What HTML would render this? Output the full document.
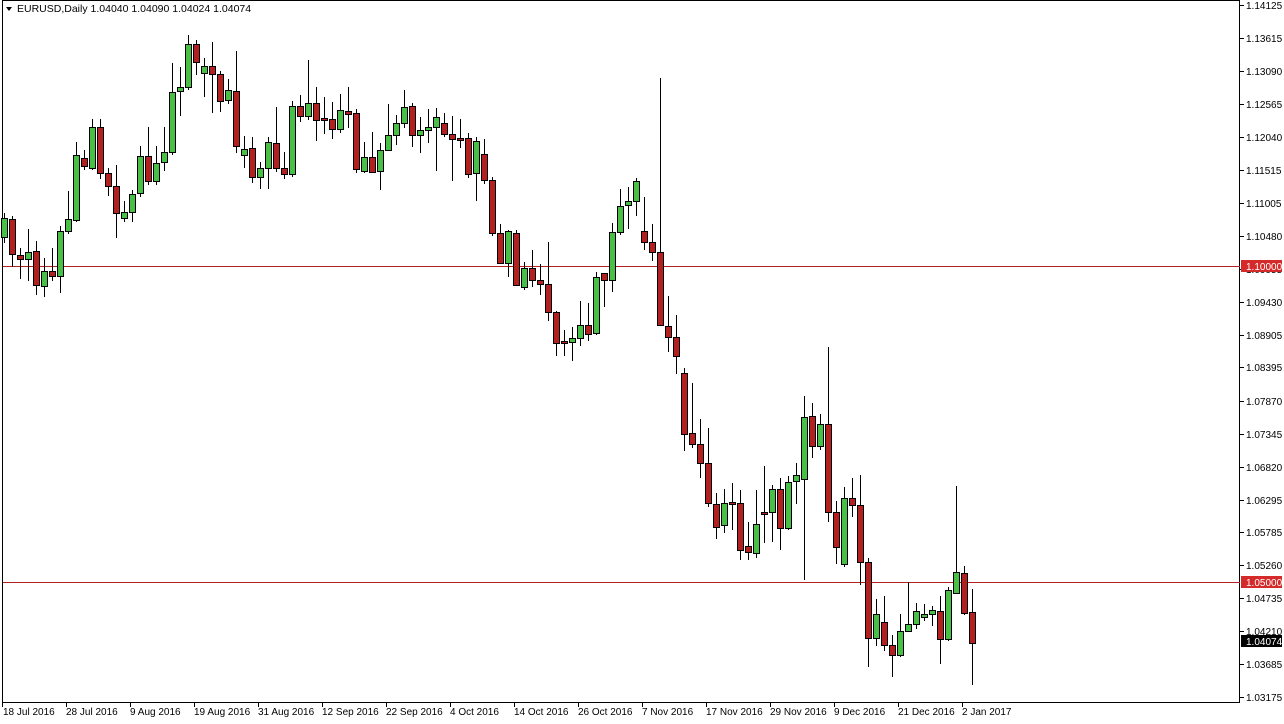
<!DOCTYPE html>
<html><head><meta charset="utf-8"><style>
html,body{margin:0;padding:0;background:#fff;}
body{width:1284px;height:724px;overflow:hidden;position:relative;font-family:"Liberation Sans",sans-serif;}
svg{position:absolute;left:0;top:0;}
svg text{font-family:"Liberation Sans",sans-serif;font-size:10px;fill:#000;}
</style></head><body>
<svg id="s" width="1284" height="724" viewBox="0 0 1284 724" xmlns="http://www.w3.org/2000/svg">
<rect x="0" y="0" width="1284" height="724" fill="#fff"/>
<rect x="2.5" y="0.5" width="1237" height="702" fill="none" stroke="#000" stroke-width="1"/>
<line x1="3" y1="266.5" x2="1240" y2="266.5" stroke="#b22222" stroke-width="1"/>
<line x1="3" y1="582.5" x2="1240" y2="582.5" stroke="#b22222" stroke-width="1"/>
<g id="c"></g>
<polygon points="6,7 12,7 9,11" fill="#000"/>
<text x="17" y="12" style="font-size:10.5px">EURUSD,Daily  1.04040 1.04090 1.04024 1.04074</text>
<g id="ax" stroke="#000" stroke-width="1"></g>
<g>
<text x="1246" y="9">1.14125</text>
<text x="1246" y="42">1.13615</text>
<text x="1246" y="75">1.13090</text>
<text x="1246" y="108">1.12565</text>
<text x="1246" y="141">1.12040</text>
<text x="1246" y="174">1.11515</text>
<text x="1246" y="207">1.11005</text>
<text x="1246" y="240">1.10480</text>
<text x="1246" y="273">1.09955</text>
<text x="1246" y="306">1.09430</text>
<text x="1246" y="339">1.08905</text>
<text x="1246" y="371">1.08395</text>
<text x="1246" y="405">1.07870</text>
<text x="1246" y="438">1.07345</text>
<text x="1246" y="471">1.06820</text>
<text x="1246" y="504">1.06295</text>
<text x="1246" y="536">1.05785</text>
<text x="1246" y="569">1.05260</text>
<text x="1246" y="602">1.04735</text>
<text x="1246" y="635">1.04210</text>
<text x="1246" y="668">1.03685</text>
<text x="1246" y="701">1.03175</text>
</g>
<rect x="1241" y="260" width="41" height="12" fill="#d42a2a"/>
<text x="1246" y="270" style="fill:#fff">1.10000</text>
<rect x="1241" y="576" width="41" height="12" fill="#d42a2a"/>
<text x="1246" y="586" style="fill:#fff">1.05000</text>
<rect x="1241" y="635" width="41" height="12" fill="#000"/>
<text x="1246" y="645" style="fill:#fff">1.04074</text>
<g style="font-size:9.6px">
<text x="3" y="715">18 Jul 2016</text>
<text x="66" y="715">28 Jul 2016</text>
<text x="130" y="715">9 Aug 2016</text>
<text x="194" y="715">19 Aug 2016</text>
<text x="258" y="715">31 Aug 2016</text>
<text x="322" y="715">12 Sep 2016</text>
<text x="386" y="715">22 Sep 2016</text>
<text x="450" y="715">4 Oct 2016</text>
<text x="514" y="715">14 Oct 2016</text>
<text x="578" y="715">26 Oct 2016</text>
<text x="642" y="715">7 Nov 2016</text>
<text x="706" y="715">17 Nov 2016</text>
<text x="770" y="715">29 Nov 2016</text>
<text x="834" y="715">9 Dec 2016</text>
<text x="898" y="715">21 Dec 2016</text>
<text x="962" y="715">2 Jan 2017</text>
</g>
</svg>
<script>
var d=[
[213,243,218,237,'g'],[216,267,219,254,'r'],[248,279,255,259,'r'],[229,281,252,259,'g'],[241,295,251,285,'r'],[258,297,271,286,'g'],[248,281,271,276,'r'],[226,293,231,276,'g'],[191,234,219,231,'g'],[142,222,155,220,'g'],
[150,170,158,166,'r'],[119,170,127,168,'g'],[119,179,127,173,'r'],[168,196,173,186,'r'],[165,238,186,213,'r'],[201,222,212,218,'g'],[190,222,194,212,'g'],[146,197,156,193,'g'],[127,185,156,181,'r'],[146,185,163,181,'g'],
[127,171,152,162,'g'],[63,155,92,152,'g'],[67,116,87,91,'g'],[35,90,44,87,'g'],[40,75,44,62,'r'],[58,97,66,73,'g'],[42,113,66,74,'r'],[71,112,74,101,'r'],[79,104,90,100,'g'],[51,153,91,146,'r'],
[136,168,149,155,'g'],[137,183,148,177,'r'],[162,189,168,177,'g'],[137,189,142,168,'g'],[107,172,143,168,'r'],[152,179,168,174,'r'],[101,177,106,174,'g'],[95,122,106,116,'r'],[60,120,103,116,'g'],[87,141,103,120,'r'],
[97,134,118,120,'r'],[102,139,119,129,'r'],[94,133,110,129,'g'],[87,128,111,114,'r'],[109,173,113,169,'r'],[142,173,157,171,'g'],[132,172,157,172,'r'],[143,190,150,171,'g'],[104,151,135,150,'g'],[115,145,123,135,'g'],
[90,128,107,123,'g'],[103,147,106,135,'r'],[117,153,130,135,'g'],[109,143,127,130,'g'],[108,171,117,127,'g'],[113,137,123,134,'r'],[116,181,134,139,'r'],[119,148,138,140,'r'],[133,178,138,174,'r'],[137,201,141,173,'g'],
[139,184,154,180,'r'],[177,236,180,233,'r'],[224,264,233,263,'r'],[230,277,231,263,'g'],[230,286,233,285,'r'],[262,290,268,287,'g'],[250,287,268,280,'r'],[264,295,280,284,'r'],[242,321,284,312,'r'],[311,356,312,343,'r'],
[330,356,341,343,'r'],[327,361,338,342,'g'],[301,346,325,338,'g'],[303,341,325,334,'r'],[272,335,277,333,'g'],[273,307,273,280,'r'],[223,292,232,280,'g'],[189,235,206,232,'g'],[187,229,201,205,'g'],[178,216,181,201,'g'],
[197,250,231,242,'r'],[224,261,242,252,'r'],[78,326,252,325,'r'],[296,352,326,337,'r'],[315,374,337,356,'r'],[368,451,373,434,'r'],[383,448,433,444,'r'],[419,478,444,463,'r'],[428,507,463,503,'r'],[493,539,504,527,'r'],
[489,533,503,525,'g'],[483,530,502,504,'r'],[490,560,503,550,'r'],[522,560,546,552,'r'],[490,558,524,553,'g'],[466,543,512,514,'r'],[485,542,489,512,'g'],[478,550,489,528,'r'],[476,530,482,528,'g'],[463,504,475,481,'g'],
[396,580,417,479,'g'],[403,458,416,446,'r'],[414,450,424,446,'g'],[347,522,424,512,'r'],[501,564,512,547,'r'],[487,567,498,564,'g'],[478,517,498,505,'r'],[475,585,505,562,'r'],[558,667,562,638,'r'],[599,646,614,638,'g'],
[596,651,622,645,'r'],[635,677,645,655,'r'],[614,657,631,655,'g'],[582,632,624,631,'g'],[603,629,611,624,'g'],[604,621,614,617,'g'],[606,626,610,614,'g'],[596,664,611,639,'r'],[587,641,590,639,'g'],[486,594,572,593,'g'],
[566,615,573,613,'r'],[589,685,612,643,'r']];
var g=document.getElementById('c'),h='';
for(var i=0;i<d.length;i++){var x=4+8*i,c=d[i];
h+='<line x1="'+(x+0.5)+'" y1="'+c[0]+'" x2="'+(x+0.5)+'" y2="'+c[1]+'" stroke="#000" stroke-width="1"/>';
var ht=Math.max(c[3]-c[2],1);
h+='<rect x="'+(x-2.5)+'" y="'+(c[2]+0.5)+'" width="6" height="'+ht+'" fill="'+(c[4]=='g'?'#48c048':'#b22020')+'" stroke="#000" stroke-width="1"/>';}
g.innerHTML=h;
var a='',ys=[5,38,71,104,137,170,203,236,269,302,335,367,401,434,467,500,532,565,598,631,664,697];
for(i=0;i<ys.length;i++)a+='<line x1="1240" y1="'+(ys[i]+.5)+'" x2="1244" y2="'+(ys[i]+.5)+'"/>';
for(i=0;i<16;i++){var tx=2+64*i+0.5;a+='<line x1="'+tx+'" y1="703" x2="'+tx+'" y2="707"/>';}
document.getElementById('ax').innerHTML=a;
</script>
</body></html>
